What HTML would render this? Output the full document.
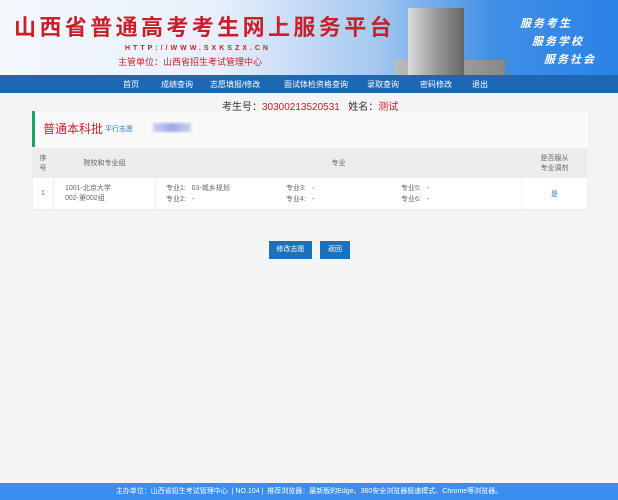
<!DOCTYPE html>
<html><head><meta charset="utf-8"><style>
*{margin:0;padding:0;box-sizing:border-box}
body{width:618px;height:500px;background:#f4f4f4;font-family:"Liberation Sans","Noto Sans CJK SC",sans-serif;position:relative;overflow:hidden;color:#333}
.banner{position:absolute;left:0;top:0;width:618px;height:75px;background:linear-gradient(90deg,#f4f8fd 0%,#e8f0fb 35%,#a9c9f0 60%,#3f8fe6 80%,#2b82e6 100%)}
.title{position:absolute;left:14px;top:12px;font-size:22px;font-weight:bold;color:#c8202a;letter-spacing:3.4px;font-family:"Noto Sans CJK SC",sans-serif;line-height:28px;white-space:nowrap}
.url{position:absolute;left:125px;top:45px;font-size:7px;color:#c8202a;letter-spacing:3px;font-weight:bold}
.org{position:absolute;left:118px;top:55px;font-size:9px;color:#c8202a}
.bld{position:absolute;left:408px;top:8px;width:56px;height:67px;background:linear-gradient(90deg,#ddd,#999 50%,#666);}
.bld2{position:absolute;left:395px;top:60px;width:110px;height:15px;background:linear-gradient(90deg,#bbb,#888)}
.slog{position:absolute;color:#fff;font-size:11px;font-style:italic;font-weight:bold;letter-spacing:2px}
.nav{position:absolute;left:0;top:75px;width:618px;height:18px;background:#1e67b4;color:#fff;font-size:8px}
.nav span{position:absolute;top:4px}
.info{position:absolute;top:98px;left:222px;font-size:10px}
.info b{font-weight:normal;color:#c8202a}
.box{position:absolute;left:32px;top:111px;width:556px;height:36px;background:#fafafa;border-left:3px solid #1aa36a}
.box .h{position:absolute;left:8px;top:9px;color:#c8202a;font-size:12px}
.box .l{position:absolute;left:70px;top:13px;color:#2a7cc7;font-size:7px}
.blur{position:absolute;left:118px;top:12px;width:38px;height:9px;background:linear-gradient(90deg,#c9d3f0,#9fa9e8,#c9d3f0);filter:blur(1px)}
table{position:absolute;left:32px;top:148px;width:556px;border-collapse:collapse;font-size:7px;color:#666}
td{border:1px solid #eee}
.hd td{background:#ececec;height:29px;text-align:center}
.rw td{background:#fff;height:32px}
.btn{position:absolute;top:241px;height:18px;background:#1e71b9;color:#fff;font-size:7px;text-align:center;line-height:18px}
.foot{position:absolute;left:0;top:483px;width:618px;height:17px;background:#3b8ef0;color:#fff;font-size:7px;text-align:center;line-height:17px}
</style></head><body>
<div class="banner">
<div class="title">山西省普通高考考生网上服务平台</div>
<div class="url">HTTP://WWW.SXKSZX.CN</div>
<div class="org">主管单位：山西省招生考试管理中心</div>
<div class="bld2"></div><div class="bld"></div>
<div class="slog" style="left:520px;top:15px">服务考生</div>
<div class="slog" style="left:532px;top:33px">服务学校</div>
<div class="slog" style="left:544px;top:51px">服务社会</div>
</div>
<div class="nav">
<span style="left:123px">首页</span><span style="left:161px">成绩查询</span><span style="left:210px">志愿填报/修改</span><span style="left:284px">面试体检资格查询</span><span style="left:367px">录取查询</span><span style="left:420px">密码修改</span><span style="left:472px">退出</span>
</div>
<div class="info">考生号：<b>30300213520531</b>&nbsp;&nbsp;&nbsp;姓名：<b>测试</b></div>
<div class="box"><div class="h">普通本科批</div><div class="l">平行志愿</div><div class="blur"></div></div>
<table>
<tr class="hd"><td style="width:21px">序<br>号</td><td style="width:102px">院校和专业组</td><td>专业</td><td style="width:66px">是否服从<br>专业调剂</td></tr>
<tr class="rw"><td style="text-align:center">1</td><td style="padding-left:11px;line-height:10px">1001-北京大学<br>002-第002组</td>
<td style="line-height:11px;padding-left:10px"><span style="display:inline-block;width:120px">专业1:&nbsp;&nbsp;&nbsp;03-城乡规划<br>专业2:&nbsp;&nbsp;&nbsp;-</span><span style="display:inline-block;width:115px">专业3:&nbsp;&nbsp;&nbsp;-<br>专业4:&nbsp;&nbsp;&nbsp;-</span><span style="display:inline-block">专业5:&nbsp;&nbsp;&nbsp;-<br>专业6:&nbsp;&nbsp;&nbsp;-</span></td>
<td style="text-align:center;color:#2a7cc7">是</td></tr>
</table>
<div class="btn" style="left:269px;width:43px">修改志愿</div>
<div class="btn" style="left:320px;width:30px">返回</div>
<div class="foot">主办单位：山西省招生考试管理中心 &nbsp;| NO.104 | &nbsp;推荐浏览器：最新版的Edge、360安全浏览器极速模式、Chrome等浏览器。</div>
</body></html>
